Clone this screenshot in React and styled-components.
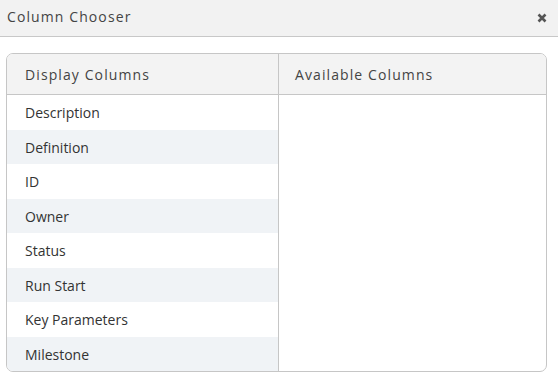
import React from "react";
import styled, { createGlobalStyle } from "styled-components";

const Global = createGlobalStyle`
  html, body { margin: 0; padding: 0; background: #fff; }
  body { font-family: "Open Sans", "Liberation Sans", sans-serif; }
  * { box-sizing: border-box; }
`;

const Dialog = styled.div`
  width: 558px;
  height: 373px;
  background: #fff;
  display: flex;
  flex-direction: column;
`;

const TitleBar = styled.div`
  height: 37px;
  flex: none;
  background: #f2f2f2;
  border-bottom: 1px solid #c8c8c8;
  display: flex;
  align-items: center;
  justify-content: space-between;
  padding: 0 10px 3px 7px;
`;

const Title = styled.span`
  font-size: 14px;
  letter-spacing: 1.1px;
  color: #444;
`;

const Close = styled.svg`
  width: 10px;
  height: 10px;
  margin-right: 1px;
  margin-top: 2px;
`;

const Body = styled.div`
  flex: 1;
  padding: 16px 11px 1px 6px;
  display: flex;
`;

const Panel = styled.div`
  flex: 1;
  border: 1px solid #c6c6c6;
  border-radius: 7px;
  overflow: hidden;
  display: grid;
  grid-template-columns: 271px 1fr;
`;

const Column = styled.div`
  display: flex;
  flex-direction: column;
  border-left: ${(p) => (p.$divided ? "1px solid #c6c6c6" : "none")};
`;

const Header = styled.div`
  height: 41px;
  flex: none;
  background: #f3f3f3;
  border-bottom: 1px solid #c6c6c6;
  display: flex;
  align-items: center;
  padding: 0 0 0 ${(p) => p.$pad}px;
  font-size: 14px;
  letter-spacing: 1.1px;
  color: #444;
`;

const Row = styled.div`
  height: 34.5px;
  display: flex;
  align-items: center;
  padding: 1px 0 0 18px;
  font-size: 14px;
  color: #333;
  background: ${(p) => (p.$alt ? "#f0f3f6" : "#fff")};
`;

const items = [
  "Description",
  "Definition",
  "ID",
  "Owner",
  "Status",
  "Run Start",
  "Key Parameters",
  "Milestone",
];

export default function App() {
  return (
    <>
      <Global />
      <Dialog>
        <TitleBar>
          <Title>Column Chooser</Title>
          <Close viewBox="0 0 10 10">
            <path d="M1.5 1.5 L8.5 8.5 M8.5 1.5 L1.5 8.5" stroke="#555" strokeWidth="2.6" strokeLinecap="butt" />
          </Close>
        </TitleBar>
        <Body>
          <Panel>
            <Column>
              <Header $pad={18}>Display Columns</Header>
              {items.map((t, i) => (
                <Row key={t} $alt={i % 2 === 1}>{t}</Row>
              ))}
            </Column>
            <Column $divided>
              <Header $pad={16}>Available Columns</Header>
            </Column>
          </Panel>
        </Body>
      </Dialog>
    </>
  );
}
